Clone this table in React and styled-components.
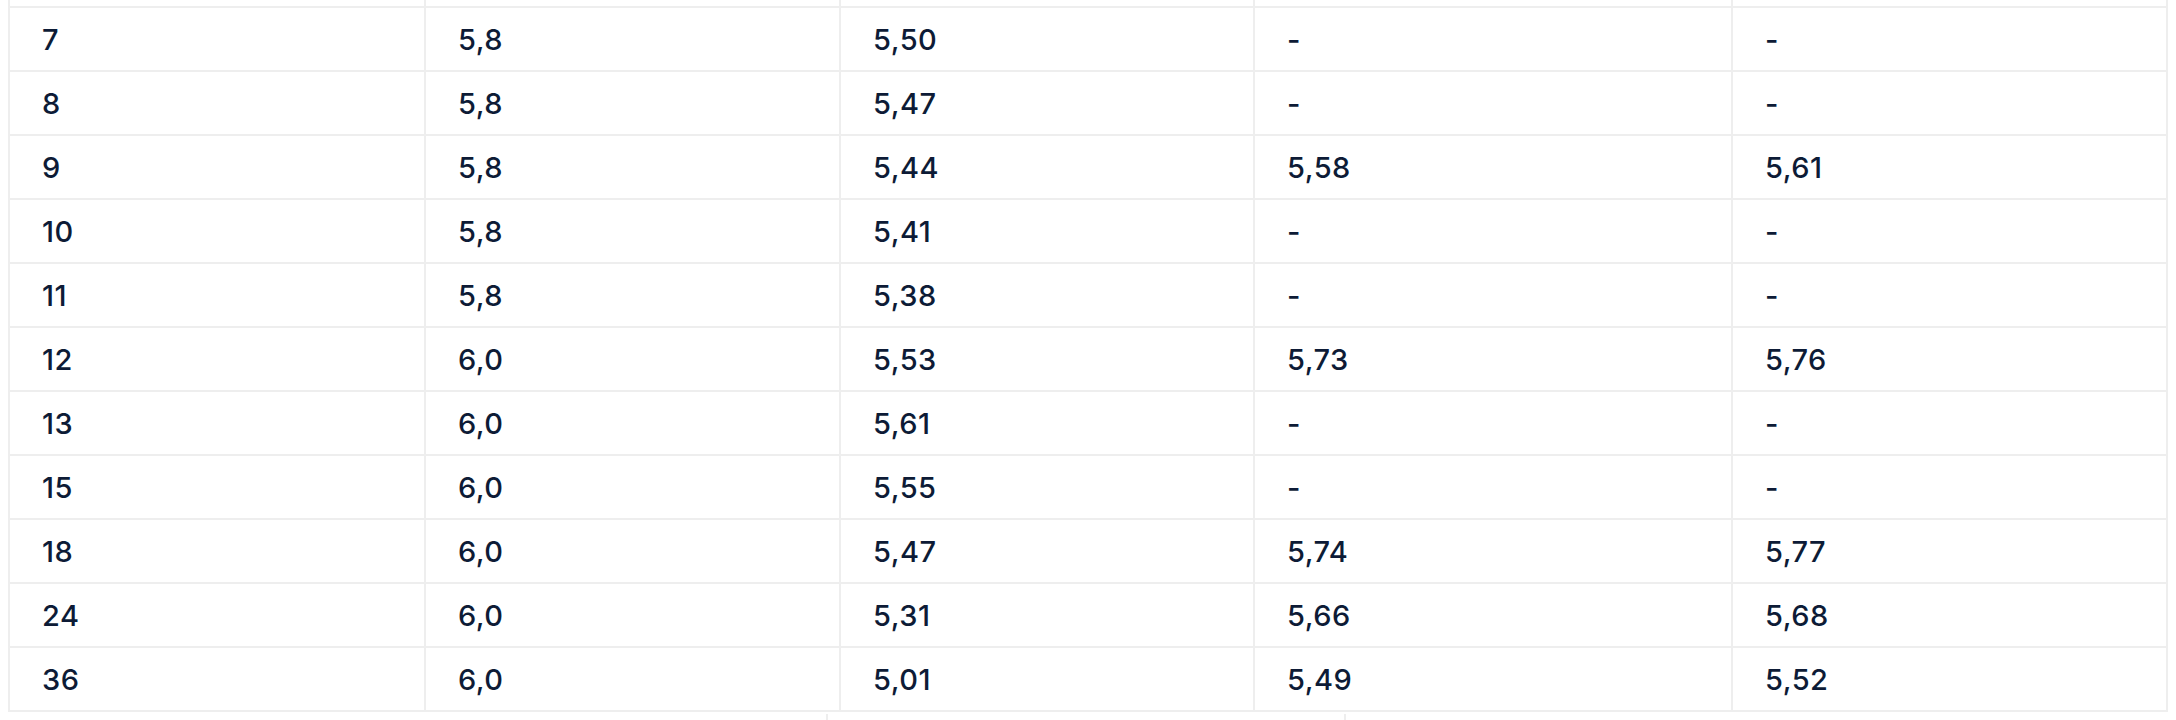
import React from "react";
import styled, { createGlobalStyle } from "styled-components";

const Global = createGlobalStyle`
  html, body { background: #ffffff; }
  body {
    margin: 0 8px;
    font-family: Inter, "Noto Sans", "Liberation Sans", sans-serif;
    color: #0d1b36;
  }
`;

const LINE = "#eeeeee";
const COLS = "416px 415px 414px 478px 435px";

const Table = styled.div`
  width: 2160px;
  border-left: 2px solid ${LINE};
  box-sizing: border-box;
`;

const Row = styled.div`
  display: grid;
  grid-template-columns: ${COLS};
  border-bottom: 2px solid ${LINE};
  box-sizing: border-box;
  height: ${(p) => p.$h}px;
`;

const Cell = styled.div`
  border-right: 2px solid ${LINE};
  box-sizing: border-box;
  display: flex;
  align-items: center;
  padding: 1px 32px 0;
  font-size: 29px;
  font-weight: 500;
  letter-spacing: 0.5px;
  line-height: 1;
  white-space: nowrap;
`;

const NextBlock = styled.div`
  margin-top: 2px;
  height: 8px;
  width: 2160px;
  display: grid;
  grid-template-columns: 818px 518px 1fr;
`;

const NextCell = styled.div`
  border-left: ${(p) => (p.$edge ? "2px solid " + LINE : "none")};
  box-sizing: border-box;
`;

const rows = [
  ["7", "5,8", "5,50", "-", "-"],
  ["8", "5,8", "5,47", "-", "-"],
  ["9", "5,8", "5,44", "5,58", "5,61"],
  ["10", "5,8", "5,41", "-", "-"],
  ["11", "5,8", "5,38", "-", "-"],
  ["12", "6,0", "5,53", "5,73", "5,76"],
  ["13", "6,0", "5,61", "-", "-"],
  ["15", "6,0", "5,55", "-", "-"],
  ["18", "6,0", "5,47", "5,74", "5,77"],
  ["24", "6,0", "5,31", "5,66", "5,68"],
  ["36", "6,0", "5,01", "5,49", "5,52"],
];

export default function App() {
  return (
    <>
      <Global />
      <Table>
        <Row $h={8}>
          {[0, 1, 2, 3, 4].map((i) => (
            <Cell key={i} />
          ))}
        </Row>
        {rows.map((r, i) => (
          <Row key={i} $h={64}>
            {r.map((v, j) => (
              <Cell key={j}>{v}</Cell>
            ))}
          </Row>
        ))}
      </Table>
      <NextBlock>
        <NextCell />
        <NextCell $edge />
        <NextCell $edge />
      </NextBlock>
    </>
  );
}
